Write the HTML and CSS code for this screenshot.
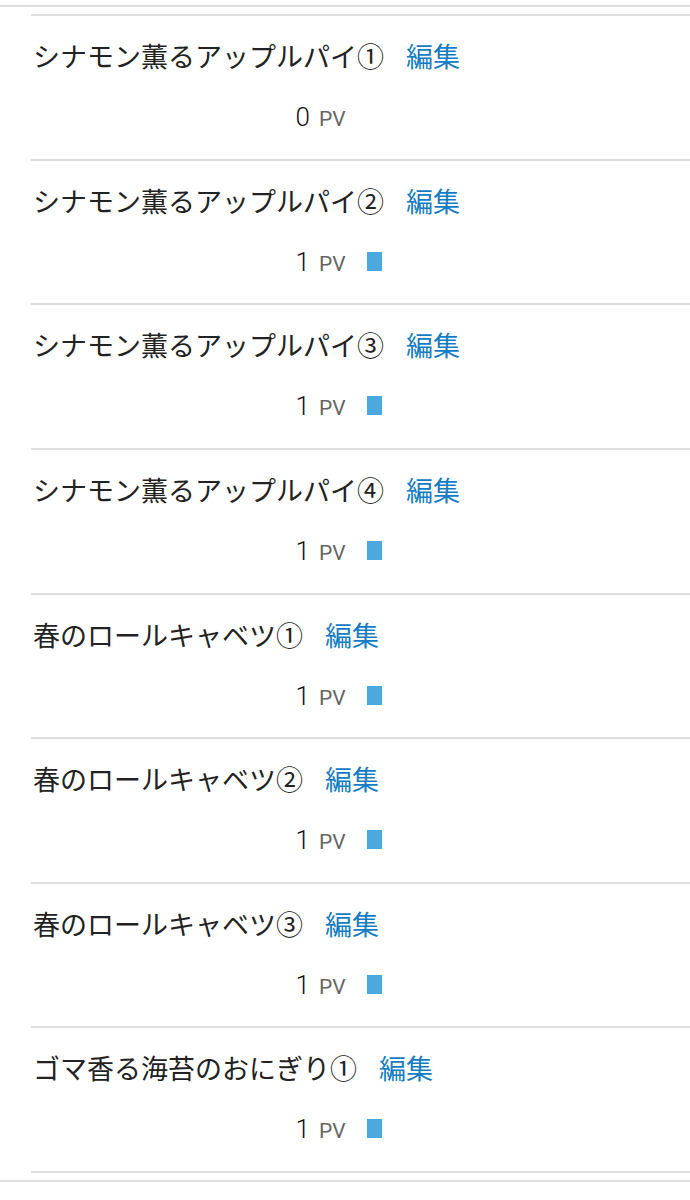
FILE: index.html
```html
<!DOCTYPE html>
<html lang="ja">
<head>
<meta charset="utf-8">
<link rel="stylesheet" href="styles.css">
</head>
<body>
<div class="wrap">
  <ul class="list">
    <li class="row">
      <div class="title"><span class="name">シナモン薫るアップルパイ①</span><a class="edit" href="#">編集</a></div>
      <div class="pv"><span class="num">0</span><span class="unit">PV</span></div>
    </li>
    <li class="row">
      <div class="title"><span class="name">シナモン薫るアップルパイ②</span><a class="edit" href="#">編集</a></div>
      <div class="pv"><span class="num">1</span><span class="unit">PV</span><span class="bar" style="width:15px"></span></div>
    </li>
    <li class="row">
      <div class="title"><span class="name">シナモン薫るアップルパイ③</span><a class="edit" href="#">編集</a></div>
      <div class="pv"><span class="num">1</span><span class="unit">PV</span><span class="bar" style="width:15px"></span></div>
    </li>
    <li class="row">
      <div class="title"><span class="name">シナモン薫るアップルパイ④</span><a class="edit" href="#">編集</a></div>
      <div class="pv"><span class="num">1</span><span class="unit">PV</span><span class="bar" style="width:15px"></span></div>
    </li>
    <li class="row">
      <div class="title"><span class="name">春のロールキャベツ①</span><a class="edit" href="#">編集</a></div>
      <div class="pv"><span class="num">1</span><span class="unit">PV</span><span class="bar" style="width:15px"></span></div>
    </li>
    <li class="row">
      <div class="title"><span class="name">春のロールキャベツ②</span><a class="edit" href="#">編集</a></div>
      <div class="pv"><span class="num">1</span><span class="unit">PV</span><span class="bar" style="width:15px"></span></div>
    </li>
    <li class="row">
      <div class="title"><span class="name">春のロールキャベツ③</span><a class="edit" href="#">編集</a></div>
      <div class="pv"><span class="num">1</span><span class="unit">PV</span><span class="bar" style="width:15px"></span></div>
    </li>
    <li class="row">
      <div class="title"><span class="name">ゴマ香る海苔のおにぎり①</span><a class="edit" href="#">編集</a></div>
      <div class="pv"><span class="num">1</span><span class="unit">PV</span><span class="bar" style="width:15px"></span></div>
    </li>
  </ul>
</div>
</body>
</html>
```

FILE: styles.css
```css
html, body {
  margin: 0;
  padding: 0;
  background: #fff;
}

body {
  font-family: "Noto Sans CJK JP", "Noto Sans", sans-serif;
  color: #222;
}

.wrap {
  margin-top: 5px;
  border-top: 2px solid #dedede;
  border-bottom: 2px solid #dedede;
  padding: 7px 0;
}

.list {
  list-style: none;
  margin: 0 0 0 31px;
  padding: 0;
  border-bottom: 2px solid #dedede;
}

.row {
  box-sizing: border-box;
  height: 144.625px;
  border-top: 2px solid #dedede;
  padding-top: 20px;
}

.title {
  display: flex;
  align-items: center;
  height: 40px;
  font-size: 27px;
  line-height: 40px;
  padding-left: 2px;
}

.name {
  color: #222;
}

.edit {
  margin-left: 22px;
  color: #137cc4;
  text-decoration: none;
}

.pv {
  display: flex;
  align-items: baseline;
  height: 30px;
  line-height: 30px;
  margin-top: 26px;
}

.num {
  width: 279px;
  text-align: right;
  font-family: Roboto, "Noto Sans", sans-serif;
  font-weight: 300;
  font-size: 26px;
  color: #111;
}

.unit {
  margin-left: 9px;
  font-family: Roboto, "Noto Sans", sans-serif;
  font-size: 21px;
  color: #666;
}

.bar {
  display: block;
  height: 19px;
  margin-left: 21px;
  background: #4ca9e0;
}
```
